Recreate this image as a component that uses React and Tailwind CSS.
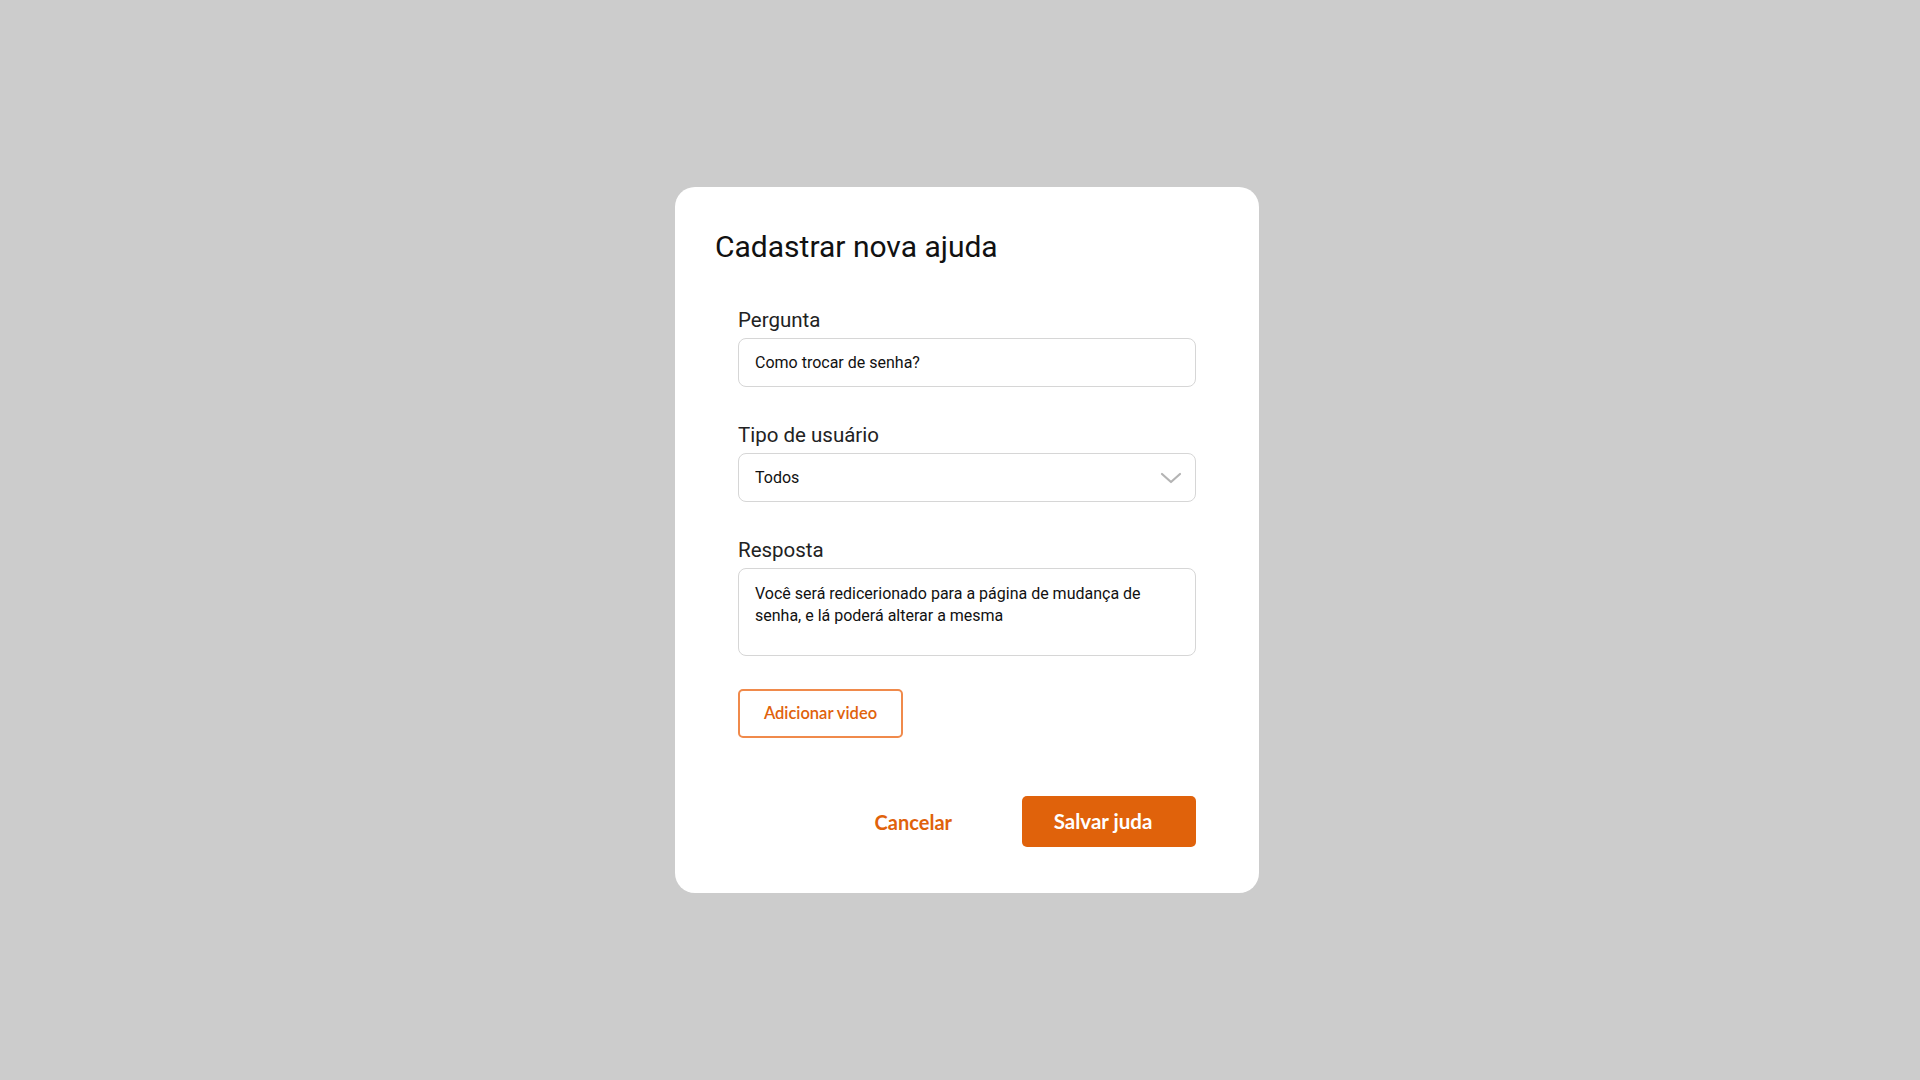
import React, { useState } from 'react'

export default function App() {
  const [pergunta, setPergunta] = useState('Como trocar de senha?')
  const [tipo, setTipo] = useState('Todos')
  const [resposta, setResposta] = useState(
    'Você será redicerionado para a página de mudança de senha, e lá poderá alterar a mesma'
  )

  const labelCls = "block text-[20.5px] leading-[28px] text-[#222222] font-['Roboto',sans-serif] mb-1"
  const fieldCls =
    "w-full rounded-lg border border-[#d6d6d6] bg-white px-4 text-[16px] text-[#111111] font-['Roboto',sans-serif] outline-none"

  return (
    <div className="min-h-screen w-full bg-[#cccccc] flex items-center justify-center">
      <div className="ml-[14px] w-[584px] h-[706px] bg-white rounded-[20px] pt-[42px]">
        <h2 className="px-[40px] text-[30px] leading-[36px] text-[#111111] font-['Roboto',sans-serif] font-normal">
          Cadastrar nova ajuda
        </h2>

        <div className="px-[63px] pt-[41px]">
          <label className={labelCls}>Pergunta</label>
          <input
            className={fieldCls + ' h-[49px]'}
            value={pergunta}
            onChange={e => setPergunta(e.target.value)}
          />

          <label className={labelCls + ' mt-[34px]'}>Tipo de usuário</label>
          <div className="relative">
            <select
              className={fieldCls + ' h-[49px] appearance-none'}
              value={tipo}
              onChange={e => setTipo(e.target.value)}
            >
              <option>Todos</option>
              <option>Administrador</option>
              <option>Usuário</option>
            </select>
            <svg
              className="pointer-events-none absolute right-[14px] top-1/2 -translate-y-1/2"
              width="22"
              height="14"
              viewBox="0 0 22 14"
              fill="none"
            >
              <path d="M2 3 L11 11 L20 3" stroke="#b4b4b4" strokeWidth="2.2" strokeLinecap="round" strokeLinejoin="round" />
            </svg>
          </div>

          <label className={labelCls + ' mt-[34px]'}>Resposta</label>
          <textarea
            className={fieldCls + ' h-[88px] py-[14px] leading-[22px] resize-none block'}
            value={resposta}
            onChange={e => setResposta(e.target.value)}
          />

          <button className="mt-[33px] w-[165px] h-[49px] rounded-[5px] border-2 border-[#f08a4b] text-[#e0620b] text-[16.5px] font-semibold font-['Lato',sans-serif]">
            Adicionar video
          </button>

          <div className="mt-[58px] flex items-center justify-end">
            <button className="mr-[70px] text-[#e0620b] text-[20px] font-bold font-['Lato',sans-serif]">
              Cancelar
            </button>
            <button className="w-[174px] h-[51px] rounded-[5px] bg-[#e0620b] text-white text-[20.5px] font-bold font-['Lato',sans-serif] pr-[12px]">
              Salvar juda
            </button>
          </div>
        </div>
      </div>
    </div>
  )
}
